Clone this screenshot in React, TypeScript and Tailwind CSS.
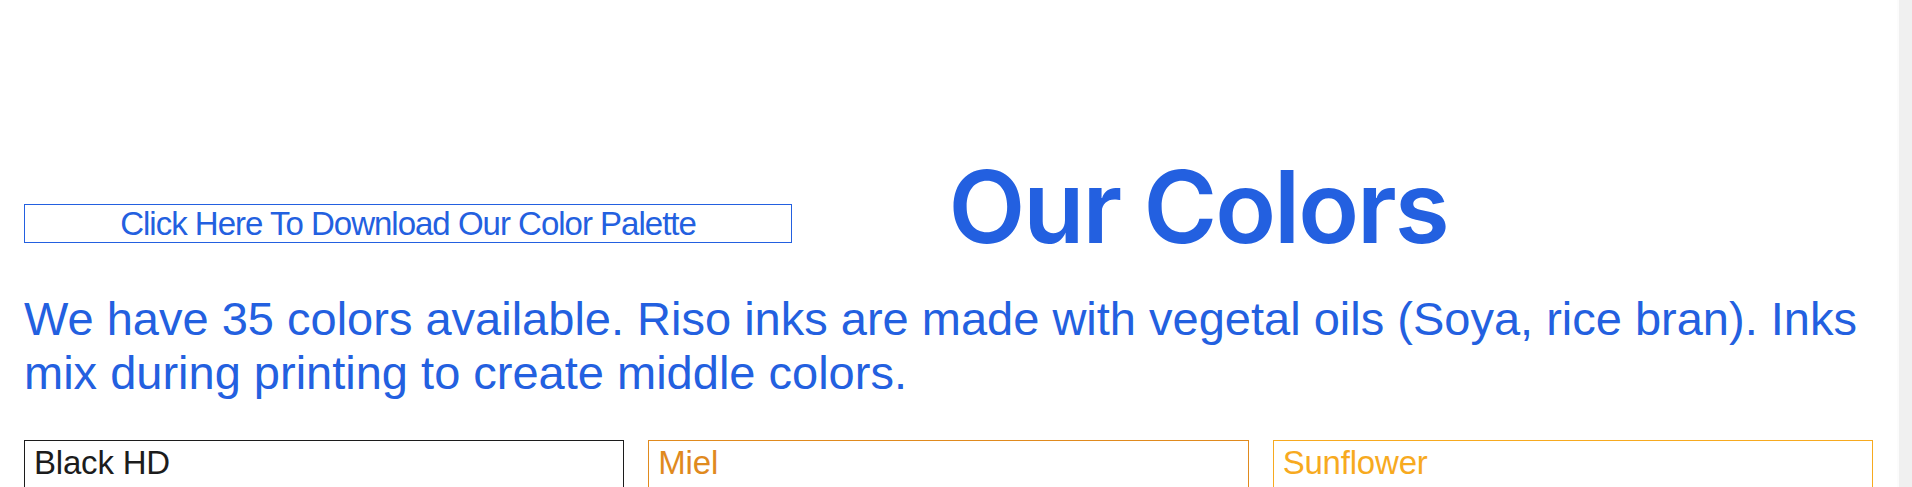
import React from "react";

const cards = [
  { name: "Black HD", text: "text-[#1c1c1c]", border: "border-[#1c1c1c]" },
  { name: "Miel", text: "text-[#e08a1e]", border: "border-[#e08a1e]" },
  { name: "Sunflower", text: "text-[#f7aa1f]", border: "border-[#f7aa1f]" },
];

export default function App() {
  return (
    <div className="flex h-[487px] w-full overflow-hidden bg-white">
      <main className="flex-1 px-[24px] pt-[157px] font-['Liberation_Sans',Arial,sans-serif]">
        <div className="grid grid-cols-2 items-end">
          <div className="mb-[14px]">
            <a
              href="#"
              className="flex h-[39px] w-[768px] items-center justify-center border border-[#2360e0] text-[33px] leading-none tracking-[-1px] text-[#2360e0]"
            >
              Click Here To Download Our Color Palette
            </a>
          </div>
          <h1 className="font-['Inter',sans-serif] text-[100px] font-semibold leading-none tracking-[-0.02em] text-[#2360e0]">
            Our Colors
          </h1>
        </div>
        <p className="mt-[35px] text-[47px] leading-[54px] text-[#2360e0]">
          <span className="block whitespace-nowrap">
            We have 35 colors available. Riso inks are made with vegetal oils (Soya, rice bran). Inks
          </span>
          <span className="block whitespace-nowrap">mix during printing to create middle colors.</span>
        </p>
        <div className="mt-[40px] grid grid-cols-3 gap-[24px]">
          {cards.map((c) => (
            <div key={c.name} className={`h-[300px] border ${c.border} px-[9px] pt-[3px]`}>
              <div className={`text-[33px] leading-[38px] tracking-[-0.2px] ${c.text}`}>{c.name}</div>
            </div>
          ))}
        </div>
      </main>
      <aside className="h-full w-[15px] shrink-0 border-l-2 border-l-[#fcfcfc] bg-[#f0f0f0]" />
    </div>
  );
}
